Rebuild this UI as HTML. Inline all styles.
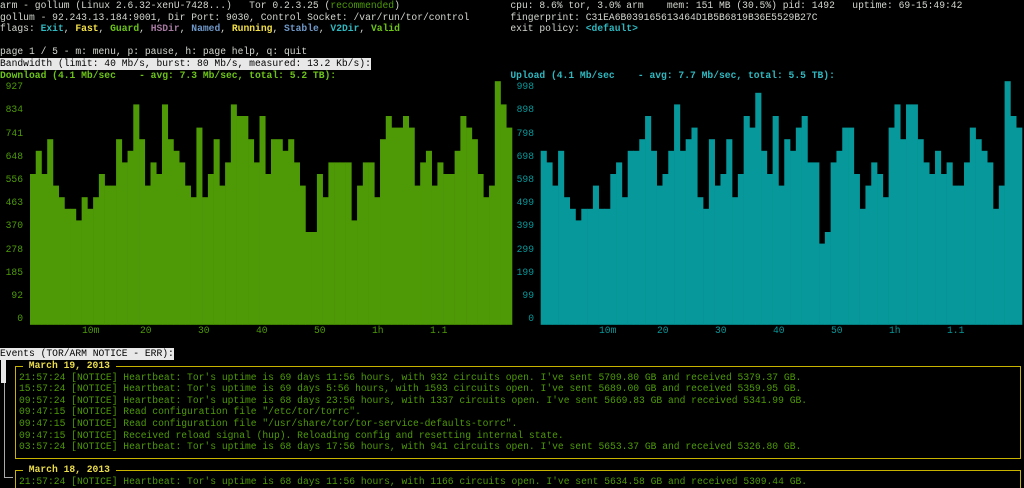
<!DOCTYPE html>
<html><head><meta charset="utf-8">
<style>
html,body{margin:0;padding:0;background:#000;width:1024px;height:488px;overflow:hidden}
body{position:relative;font-family:"Liberation Mono",monospace;font-size:9.67px;color:#d3d7cf}
.r{position:absolute;white-space:pre;line-height:11.6px;height:11.6px}
b{font-weight:bold}
.cy{color:#2fb8c0;font-weight:bold}.ye{color:#f2e04a;font-weight:bold}.gr{color:#6cc417;font-weight:bold}
.mg{color:#a57aa0;font-weight:bold}.bl{color:#6f98c8;font-weight:bold}
.g{color:#4e9a06}.inv{background:#e8e8e8;color:#000}
.ev{color:#4e9a06}
.lab{position:absolute;white-space:pre;line-height:11.6px;text-align:right}
.box{position:absolute;border:1.5px solid #c8b400;box-sizing:border-box}
.ttl{position:absolute;white-space:pre;line-height:11.6px;background:#000;color:#eadc4c;font-weight:bold}
</style></head><body>
<div class="r" style="left:0;top:0">arm - gollum (Linux 2.6.32-xenU-7428...)   Tor 0.2.3.25 (<span class="g">recommended</span>)</div>
<div class="r" style="left:0;top:11.6px">gollum - 92.243.13.184:9001, Dir Port: 9030, Control Socket: /var/run/tor/control</div>
<div class="r" style="left:0;top:23.2px">flags: <span class="cy">Exit</span>, <span class="ye">Fast</span>, <span class="gr">Guard</span>, <span class="mg">HSDir</span>, <span class="bl">Named</span>, <span class="ye">Running</span>, <span class="bl">Stable</span>, <span class="cy">V2Dir</span>, <span class="gr">Valid</span></div>
<div class="r" style="left:510.4px;top:0">cpu: 8.6% tor, 3.0% arm    mem: 151 MB (30.5%) pid: 1492   uptime: 69-15:49:42</div>
<div class="r" style="left:510.4px;top:11.6px">fingerprint: C31EA6B039165613464D1B5B6819B36E5529B27C</div>
<div class="r" style="left:510.4px;top:23.2px">exit policy: <span class="cy">&lt;default&gt;</span></div>
<div class="r" style="left:0;top:46.4px">page 1 / 5 - m: menu, p: pause, h: page help, q: quit</div>
<div class="r inv" style="left:0;top:58px">Bandwidth (limit: 40 Mb/s, burst: 80 Mb/s, measured: 13.2 Kb/s):</div>
<div class="r gr" style="left:0;top:69.6px">Download (4.1 Mb/sec    - avg: 7.3 Mb/sec, total: 5.2 TB):</div>
<div class="r cy" style="left:510.4px;top:69.6px">Upload (4.1 Mb/sec    - avg: 7.7 Mb/sec, total: 5.5 TB):</div>
<div id="g"></div>
<svg id="sv" width="1024" height="488" style="position:absolute;left:0;top:0"></svg>
<div class="r inv" style="left:0;top:348px">Events (TOR/ARM NOTICE - ERR):</div>
<div style="position:absolute;left:1px;top:359px;width:5px;height:24px;background:#e8e8e8"></div>
<div style="position:absolute;left:4px;top:383px;width:1px;height:95px;background:#aaa"></div>
<div style="position:absolute;left:4px;top:477px;width:9px;height:1px;background:#aaa"></div>
<div class="box" style="left:15px;top:366px;width:1006px;height:93px"></div>
<div class="ttl" style="left:23px;top:359.6px"> March 19, 2013 </div>
<div class="box" style="left:15px;top:470px;width:1006px;height:40px"></div>
<div class="ttl" style="left:23px;top:464px"> March 18, 2013 </div>
<div class="r ev" style="left:19px;top:371.6px">21:57:24 [NOTICE] Heartbeat: Tor's uptime is 69 days 11:56 hours, with 932 circuits open. I've sent 5709.80 GB and received 5379.37 GB.</div>
<div class="r ev" style="left:19px;top:383.2px">15:57:24 [NOTICE] Heartbeat: Tor's uptime is 69 days 5:56 hours, with 1593 circuits open. I've sent 5689.00 GB and received 5359.95 GB.</div>
<div class="r ev" style="left:19px;top:394.8px">09:57:24 [NOTICE] Heartbeat: Tor's uptime is 68 days 23:56 hours, with 1337 circuits open. I've sent 5669.83 GB and received 5341.99 GB.</div>
<div class="r ev" style="left:19px;top:406.4px">09:47:15 [NOTICE] Read configuration file "/etc/tor/torrc".</div>
<div class="r ev" style="left:19px;top:418px">09:47:15 [NOTICE] Read configuration file "/usr/share/tor/tor-service-defaults-torrc".</div>
<div class="r ev" style="left:19px;top:429.6px">09:47:15 [NOTICE] Received reload signal (hup). Reloading config and resetting internal state.</div>
<div class="r ev" style="left:19px;top:441.2px">03:57:24 [NOTICE] Heartbeat: Tor's uptime is 68 days 17:56 hours, with 941 circuits open. I've sent 5653.37 GB and received 5326.80 GB.</div>
<div class="r ev" style="left:19px;top:476px">21:57:24 [NOTICE] Heartbeat: Tor's uptime is 68 days 11:56 hours, with 1166 circuits open. I've sent 5634.58 GB and received 5309.44 GB.</div>
<script>
var D=[13,15,13,16,12,11,10,10,9,11,10,11,13,12,12,16,14,15,19,16,12,14,13,19,16,15,14,12,11,17,11,13,16,12,14,19,18,18,16,14,18,13,16,16,15,16,14,12,8,8,13,11,14,14,14,14,9,12,14,14,11,16,18,17,17,18,17,12,14,15,12,14,13,13,15,18,17,16,13,11,12,21,19,17];
var U=[15,14,12,15,11,10,9,10,10,12,10,10,13,14,11,15,15,16,18,15,12,13,15,19,15,16,17,11,10,16,12,13,16,11,13,18,17,20,15,13,18,12,16,15,17,18,14,14,7,8,14,15,17,17,13,10,12,14,13,11,17,19,16,19,19,16,14,13,15,13,14,12,12,14,17,16,15,14,10,12,21,18,17];
var bot=324.8,rh=11.6,s='';
function bars(a,x0,x1,c){var w=(x1-x0)/a.length;for(var i=0;i<a.length;i++){var h=a[i]*rh;s+='<rect x="'+(x0+i*w).toFixed(2)+'" y="'+(bot-h).toFixed(2)+'" width="'+(w+0.3).toFixed(2)+'" height="'+h.toFixed(2)+'" fill="'+c+'"/>';}}
bars(D,30,512,'#4e9a06');bars(U,540.7,1022,'#06989a');
document.getElementById('sv').innerHTML=s;
var g='',dl=['927','834','741','648','556','463','370','278','185','92','0'],ul=['998','898','798','698','598','499','399','299','199','99','0'];
for(var i=0;i<11;i++){var t=(7+2*i)*rh;
g+='<div class="lab g" style="left:0;width:23px;top:'+t+'px">'+dl[i]+'</div>';
g+='<div class="lab" style="color:#06989a;left:500px;width:34px;top:'+t+'px">'+ul[i]+'</div>';}
var xl=['10m','20','30','40','50','1h','1.1'];
for(var i=0;i<7;i++){g+='<div class="r g" style="left:'+(82+58*i)+'px;top:324.8px">'+xl[i]+'</div>';
g+='<div class="r" style="color:#06989a;left:'+(599+58*i)+'px;top:324.8px">'+xl[i]+'</div>';}
document.getElementById('g').innerHTML=g;
</script>
</body></html>
